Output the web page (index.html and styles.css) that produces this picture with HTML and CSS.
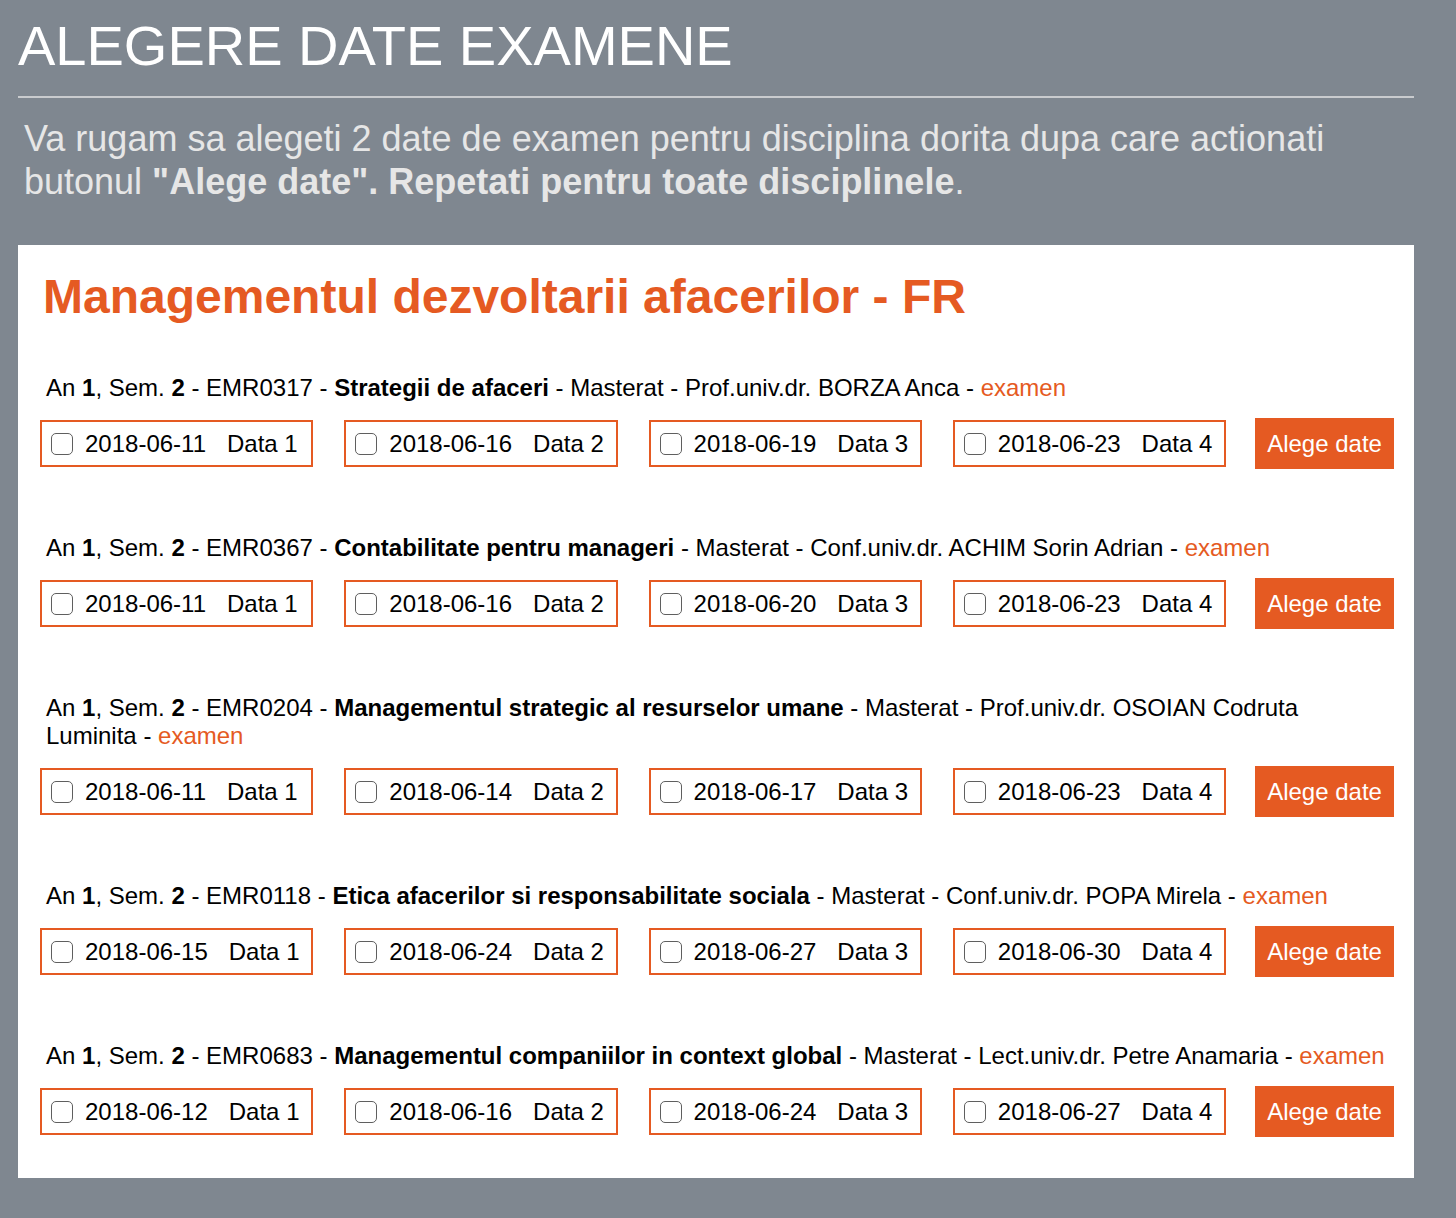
FILE: index.html
```html
<!DOCTYPE html>
<html>
  <head>
    <meta charset="utf-8">
    <title>Alegere date examene</title>
    <link rel="stylesheet" href="styles.css">
  </head>
  <body>
    <div class="page">
      <h1>ALEGERE DATE EXAMENE</h1>
      <hr>
      <p class="intro">Va rugam sa alegeti 2 date de examen pentru disciplina dorita dupa care actionati butonul <b>"Alege date". Repetati pentru toate disciplinele</b>.</p>

      <div class="panel">
        <h2>Managementul dezvoltarii afacerilor - FR</h2>

        <div class="course">
          <div class="info">An <b>1</b>, Sem. <b>2</b> - EMR0317 - <b>Strategii de afaceri</b> - Masterat - Prof.univ.dr. BORZA Anca - <span class="kind">examen</span></div>
          <div class="dates">
            <label class="date_box"><input type="checkbox"><span class="day">2018-06-11</span><span>Data 1</span></label>
            <label class="date_box"><input type="checkbox"><span class="day">2018-06-16</span><span>Data 2</span></label>
            <label class="date_box"><input type="checkbox"><span class="day">2018-06-19</span><span>Data 3</span></label>
            <label class="date_box"><input type="checkbox"><span class="day">2018-06-23</span><span>Data 4</span></label>
            <button class="choose">Alege date</button>
          </div>
        </div>

        <div class="course">
          <div class="info">An <b>1</b>, Sem. <b>2</b> - EMR0367 - <b>Contabilitate pentru manageri</b> - Masterat - Conf.univ.dr. ACHIM Sorin Adrian - <span class="kind">examen</span></div>
          <div class="dates">
            <label class="date_box"><input type="checkbox"><span class="day">2018-06-11</span><span>Data 1</span></label>
            <label class="date_box"><input type="checkbox"><span class="day">2018-06-16</span><span>Data 2</span></label>
            <label class="date_box"><input type="checkbox"><span class="day">2018-06-20</span><span>Data 3</span></label>
            <label class="date_box"><input type="checkbox"><span class="day">2018-06-23</span><span>Data 4</span></label>
            <button class="choose">Alege date</button>
          </div>
        </div>

        <div class="course">
          <div class="info">An <b>1</b>, Sem. <b>2</b> - EMR0204 - <b>Managementul strategic al resurselor umane</b> - Masterat - Prof.univ.dr. OSOIAN Codruta Luminita - <span class="kind">examen</span></div>
          <div class="dates">
            <label class="date_box"><input type="checkbox"><span class="day">2018-06-11</span><span>Data 1</span></label>
            <label class="date_box"><input type="checkbox"><span class="day">2018-06-14</span><span>Data 2</span></label>
            <label class="date_box"><input type="checkbox"><span class="day">2018-06-17</span><span>Data 3</span></label>
            <label class="date_box"><input type="checkbox"><span class="day">2018-06-23</span><span>Data 4</span></label>
            <button class="choose">Alege date</button>
          </div>
        </div>

        <div class="course">
          <div class="info">An <b>1</b>, Sem. <b>2</b> - EMR0118 - <b>Etica afacerilor si responsabilitate sociala</b> - Masterat - Conf.univ.dr. POPA Mirela - <span class="kind">examen</span></div>
          <div class="dates">
            <label class="date_box"><input type="checkbox"><span class="day">2018-06-15</span><span>Data 1</span></label>
            <label class="date_box"><input type="checkbox"><span class="day">2018-06-24</span><span>Data 2</span></label>
            <label class="date_box"><input type="checkbox"><span class="day">2018-06-27</span><span>Data 3</span></label>
            <label class="date_box"><input type="checkbox"><span class="day">2018-06-30</span><span>Data 4</span></label>
            <button class="choose">Alege date</button>
          </div>
        </div>

        <div class="course">
          <div class="info">An <b>1</b>, Sem. <b>2</b> - EMR0683 - <b>Managementul companiilor in context global</b> - Masterat - Lect.univ.dr. Petre Anamaria - <span class="kind">examen</span></div>
          <div class="dates">
            <label class="date_box"><input type="checkbox"><span class="day">2018-06-12</span><span>Data 1</span></label>
            <label class="date_box"><input type="checkbox"><span class="day">2018-06-16</span><span>Data 2</span></label>
            <label class="date_box"><input type="checkbox"><span class="day">2018-06-24</span><span>Data 3</span></label>
            <label class="date_box"><input type="checkbox"><span class="day">2018-06-27</span><span>Data 4</span></label>
            <button class="choose">Alege date</button>
          </div>
        </div>
      </div>
    </div>
  </body>
</html>
```

FILE: styles.css
```css
/* colours */
:root {
  --bg: #7f8790;
  --orange: #e55a22;
}

body {
  margin: 0;
  background-color: var(--bg);
  font-family: "Liberation Sans", Arial, sans-serif;
}

.page {
  width: 1396px;
  margin-left: 18px;
  padding-bottom: 41px;
}

h1 {
  margin: 17px 0 0;
  font-size: 56px;
  line-height: 58px;
  font-weight: normal;
  color: white;
}

hr {
  margin: 21px 0 0;
  border: 0;
  border-top: 2px solid #c9cbce;
}

.intro {
  margin: 19px 0 0;
  padding: 0 6px;
  font-size: 36px;
  line-height: 43px;
  color: #e6e6e6;
}

.panel {
  margin-top: 42px;
  background-color: white;
  padding: 22px 20px 9px 22px;
}

h2 {
  margin: 2px 0 0 3px;
  font-size: 48px;
  line-height: 56px;
  color: var(--orange);
}

.course {
  margin-top: 49px;
}

.course + .course {
  margin-top: 0;
}

.info {
  padding: 0 6px;
  font-size: 24px;
  line-height: 28px;
  color: black;
}

.kind {
  color: var(--orange);
}

.dates {
  display: flex;
  align-items: center;
  gap: 31px;
  margin-top: 16px;
  margin-bottom: 65px;
}

.course:last-child .dates {
  margin-bottom: 32px;
}

.date_box {
  box-sizing: border-box;
  width: 273.5px;
  height: 47px;
  border: 2px solid var(--orange);
  display: flex;
  align-items: center;
  padding-left: 9px;
  font-size: 24px;
  color: black;
}

.date_box input {
  appearance: none;
  -webkit-appearance: none;
  box-sizing: border-box;
  width: 22px;
  height: 22px;
  margin: 0 12px 0 0;
  border: 1.5px solid #5f5f5f;
  border-radius: 5px;
  background: white;
}

.day {
  margin-right: 21px;
}

.choose {
  margin-left: -2px;
  width: 139px;
  height: 51px;
  border: 0;
  background-color: var(--orange);
  color: white;
  font-family: "Liberation Sans", Arial, sans-serif;
  font-size: 24px;
  padding: 0;
}
```
